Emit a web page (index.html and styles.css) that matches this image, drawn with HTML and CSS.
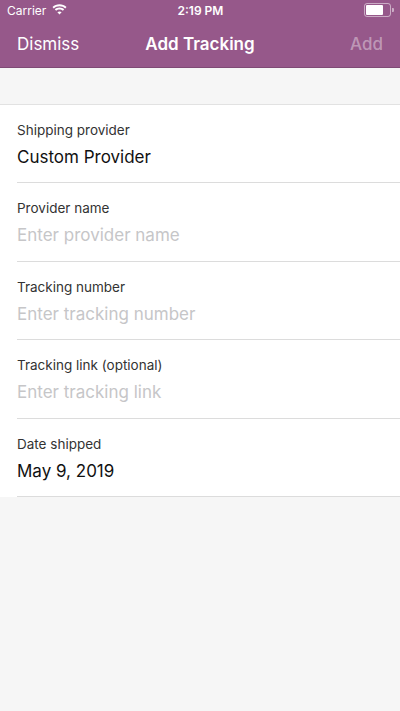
FILE: index.html
```html
<!DOCTYPE html>
<html lang="en">
<head>
  <meta charset="UTF-8" />
  <meta name="viewport" content="width=device-width, initial-scale=1.0"/>
  <title>Add Tracking</title>
  <link rel="stylesheet" href="styles.css">
</head>
<body>
  <!-- status bar -->
  <div class="status-bar">
    <div class="status-left">
      <span>Carrier</span>
      <svg class="wifi" width="15" height="11" viewBox="0 0 15 11">
        <path d="M7.5 2.2c2.2 0 4.2.8 5.7 2.2l1.3-1.4C12.6 1.2 10.2.2 7.5.2S2.4 1.2.5 3l1.3 1.4C3.3 3 5.3 2.2 7.5 2.2z" fill="#fff"/>
        <path d="M7.5 5.4c1.3 0 2.5.5 3.4 1.3l1.3-1.4C11 4.1 9.3 3.4 7.5 3.4S4 4.1 2.8 5.3l1.3 1.4c.9-.8 2.1-1.3 3.4-1.3z" fill="#fff"/>
        <path d="M7.5 10.6l2.1-2.3c-.6-.5-1.3-.8-2.1-.8s-1.5.3-2.1.8z" fill="#fff"/>
      </svg>
    </div>
    <div class="status-time">2:19 PM</div>
    <div class="status-right">
      <div class="battery"><div class="battery-fill"></div></div>
      <div class="battery-tip"></div>
    </div>
  </div>

  <!-- nav bar -->
  <div class="nav-bar">
    <span class="nav-btn">Dismiss</span>
    <span class="nav-title">Add Tracking</span>
    <span class="nav-btn disabled">Add</span>
  </div>

  <div class="content">
    <div class="form-card">
      <div class="form-row">
        <div class="row-label">Shipping provider</div>
        <div class="row-value">Custom Provider</div>
      </div>
      <div class="form-row">
        <div class="row-label">Provider name</div>
        <div class="row-value placeholder">Enter provider name</div>
      </div>
      <div class="form-row">
        <div class="row-label">Tracking number</div>
        <div class="row-value placeholder">Enter tracking number</div>
      </div>
      <div class="form-row">
        <div class="row-label">Tracking link (optional)</div>
        <div class="row-value placeholder">Enter tracking link</div>
      </div>
      <div class="form-row">
        <div class="row-label">Date shipped</div>
        <div class="row-value">May 9, 2019</div>
      </div>
    </div>
  </div>
</body>
</html>
```

FILE: styles.css
```css
body {
  margin: 0;
  font-family: Inter, "Liberation Sans", Arial, sans-serif;
  background: #f6f6f6;
  height: 711px;
}
.status-bar {
  height: 20px;
  background: #96588a;
  color: #fff;
  display: flex;
  align-items: center;
  justify-content: space-between;
  padding: 0 6px 0 7px;
  font-size: 12px;
}
.status-left {
  display: flex;
  align-items: center;
  gap: 6px;
  width: 90px;
}
.wifi {
  margin-top: -1px;
}
.status-time {
  font-weight: 600;
}
.status-right {
  width: 90px;
  display: flex;
  justify-content: flex-end;
  align-items: center;
}
.battery {
  width: 23px;
  height: 10px;
  border: 1px solid rgba(255, 255, 255, 0.5);
  border-radius: 3px;
  padding: 1px;
  box-sizing: content-box;
}
.battery-fill {
  width: 17px;
  height: 10px;
  background: #fff;
  border-radius: 1px;
}
.battery-tip {
  width: 2px;
  height: 4px;
  margin-left: 1px;
  background: rgba(255, 255, 255, 0.5);
  border-radius: 0 1px 1px 0;
}
.nav-bar {
  height: 48px;
  background: #96588a;
  border-bottom: 1px solid #7f4a75;
  box-sizing: border-box;
  display: flex;
  align-items: center;
  justify-content: space-between;
  padding: 0 17px;
  color: #fff;
  font-size: 17px;
}
.nav-title {
  font-weight: 600;
}
.nav-btn {
  width: 80px;
}
.nav-btn.disabled {
  text-align: right;
  color: rgba(255, 255, 255, 0.4);
  font-weight: 500;
}
.content {
  padding-top: 36px;
}
.form-card {
  background: #fff;
  border-top: 1px solid #e2e2e2;
}
.form-row {
  margin-left: 17px;
  padding: 16px 17px 14.4px 0;
  border-bottom: 1px solid #dcdcdc;
}
.row-label {
  font-size: 13.5px;
  line-height: 18px;
  color: #333;
}
.row-value {
  margin-top: 7px;
  font-size: 17px;
  line-height: 22px;
  color: #111;
}
.row-value.placeholder {
  color: #c6c6c8;
}
```
